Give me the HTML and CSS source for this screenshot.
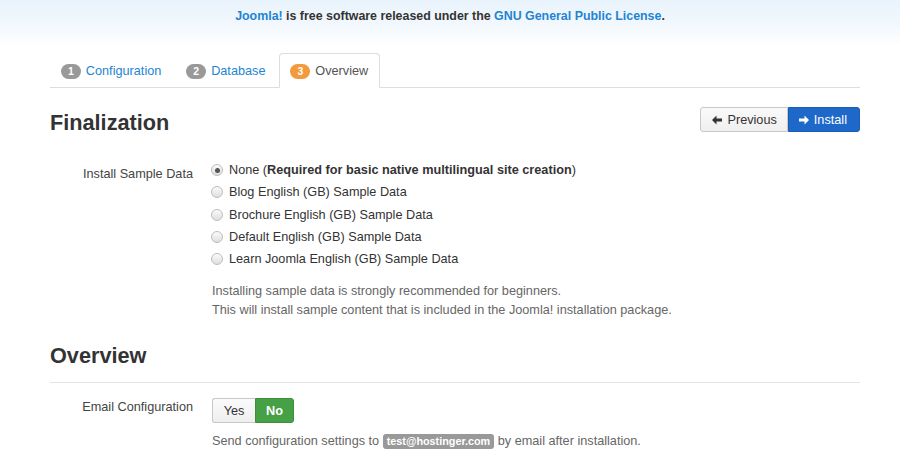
FILE: index.html
```html
<!DOCTYPE html>
<html lang="en">
<head>
<meta charset="utf-8">
<title>Joomla! Installation - Overview</title>
<link rel="stylesheet" href="styles.css">
</head>
<body>
<header class="banner">
  <p><a href="#">Joomla!</a> is free software released under the <a href="#">GNU General Public License</a>.</p>
</header>
<main class="container">
  <ul class="tabs">
    <li><a href="#"><span class="badge">1</span>Configuration</a></li>
    <li><a href="#"><span class="badge">2</span>Database</a></li>
    <li class="active"><a href="#"><span class="badge badge-warning">3</span>Overview</a></li>
  </ul>

  <div class="section-head">
    <h3>Finalization</h3>
    <div class="btn-group">
      <a class="btn" href="#"><svg class="ico" viewBox="0 0 10 10"><path d="M0 5 L4.5 0.6 L4.5 3.4 L10 3.4 L10 6.6 L4.5 6.6 L4.5 9.4 Z" fill="#333"/></svg>Previous</a>
      <a class="btn btn-primary" href="#"><svg class="ico" viewBox="0 0 10 10"><path d="M10 5 L5.5 0.6 L5.5 3.4 L0 3.4 L0 6.6 L5.5 6.6 L5.5 9.4 Z" fill="#fff"/></svg>Install</a>
    </div>
  </div>

  <div class="control-group">
    <label class="control-label">Install Sample Data</label>
    <div class="controls">
      <label class="radio"><span class="rad checked"></span>None (<b>Required for basic native multilingual site creation</b>)</label>
      <label class="radio"><span class="rad"></span>Blog English (GB) Sample Data</label>
      <label class="radio"><span class="rad"></span>Brochure English (GB) Sample Data</label>
      <label class="radio"><span class="rad"></span>Default English (GB) Sample Data</label>
      <label class="radio"><span class="rad"></span>Learn Joomla English (GB) Sample Data</label>
      <p class="help">Installing sample data is strongly recommended for beginners.<br>This will install sample content that is included in the Joomla! installation package.</p>
    </div>
  </div>

  <h3 class="overview">Overview</h3>

  <div class="control-group email">
    <label class="control-label">Email Configuration</label>
    <div class="controls">
      <div class="toggle"><span class="t-yes">Yes</span><span class="t-no">No</span></div>
      <p class="help email-help">Send configuration settings to <span class="label">test@hostinger.com</span> by email after installation.</p>
    </div>
  </div>
</main>
</body>
</html>
```

FILE: styles.css
```css
* { box-sizing: border-box; }
html, body { margin: 0; padding: 0; background: #fff; }
body {
  font-family: "Liberation Sans", Arial, Helvetica, sans-serif;
  font-size: 12.7px;
  line-height: 18px;
  color: #333;
  width: 900px;
  height: 460px;
  overflow: hidden;
}
a { color: #2384d3; text-decoration: none; }

.banner {
  height: 46px;
  background: linear-gradient(to bottom, #e9f3fc 0%, #f2f8fd 55%, #ffffff 100%);
  text-align: center;
  padding-top: 7px;
}
.banner p { margin: 0; font-weight: bold; font-size: 12.4px; line-height: 18px; }

.container { width: 810px; margin-left: 50px; }

.tabs {
  list-style: none;
  margin: 7px 0 0;
  padding: 0;
  display: flex;
  border-bottom: 1px solid #ddd;
}
.tabs li { margin: 0 2px -1px 0; }
.tabs a {
  display: flex;
  align-items: center;
  padding: 8px 11px 7px 10px;
  line-height: 18px;
  border: 1px solid transparent;
  border-radius: 4px 4px 0 0;
}
.tabs .active a {
  color: #555;
  background: #fff;
  border-color: #ddd #ddd transparent;
}
.badge {
  display: inline-block;
  background: #999;
  color: #fff;
  font-size: 10.5px;
  font-weight: bold;
  line-height: 15px;
  height: 15px;
  padding: 0 7px;
  border-radius: 8px;
  margin-right: 5px;
}
.badge-warning { background: #f39a3c; }

.section-head {
  display: flex;
  justify-content: space-between;
  align-items: flex-start;
  margin-top: 19px;
}
.section-head h3, .overview {
  margin: 0;
  font-size: 21.7px;
  line-height: 30px;
  font-weight: bold;
  color: #333;
}
.section-head h3 { padding-top: 1px; }

.btn-group { display: flex; }
.btn {
  display: flex;
  align-items: center;
  height: 25px;
  padding: 0 10px 0 11px;
  color: #333;
  background: linear-gradient(#fafafa, #efefef);
  border: 1px solid #c8c8c8;
  border-radius: 3px 0 0 3px;
}
.btn-primary {
  color: #fff;
  background: #1d68c8;
  border-color: #1a5db5;
  border-radius: 0 3px 3px 0;
  padding: 0 12px 0 10px;
}
.ico { width: 10px; height: 10px; margin-right: 5px; }

.control-group { display: flex; margin-top: 21px; }
.control-label {
  width: 143px;
  text-align: right;
  padding-top: 6px;
  color: #444;
  flex-shrink: 0;
}
.controls { margin-left: 17px; }
.radio {
  display: flex;
  align-items: center;
  line-height: 22px;
  height: 22.25px;
}
.rad {
  width: 12px;
  height: 12px;
  border-radius: 50%;
  border: 1px solid #bdbdbd;
  background: linear-gradient(#fbfbfb, #dedede);
  margin: 0 6px 0 1px;
  position: relative;
}
.rad.checked::after {
  content: "";
  position: absolute;
  left: 2.5px;
  top: 2.5px;
  width: 5px;
  height: 5px;
  border-radius: 50%;
  background: #555;
}
.help {
  margin: 12px 0 0 2px;
  line-height: 19px;
  color: #666;
}

.overview {
  margin-top: 21px;
  padding-bottom: 11px;
  border-bottom: 1px solid #e5e5e5;
}

.email { margin-top: 15px; }
.email .control-label { padding-top: 0; line-height: 18px; }
.email .controls { margin-left: 19px; }
.toggle { display: flex; height: 25px; }
.toggle span {
  display: flex;
  align-items: center;
  justify-content: center;
  height: 25px;
}
.t-yes {
  width: 43px;
  background: linear-gradient(#fafafa, #efefef);
  border: 1px solid #c8c8c8;
  border-right: none;
  border-radius: 3px 0 0 3px;
  color: #333;
}
.t-no {
  width: 39px;
  background: #46a046;
  border: 1px solid #3c8f3c;
  border-radius: 0 3px 3px 0;
  color: #fff;
  font-weight: bold;
}
.email-help { margin: 9px 0 0 0; }
.label {
  display: inline-block;
  background: #999;
  color: #fff;
  font-weight: bold;
  font-size: 10.8px;
  line-height: 15px;
  padding: 0 4px;
  border-radius: 3px;
}
```
